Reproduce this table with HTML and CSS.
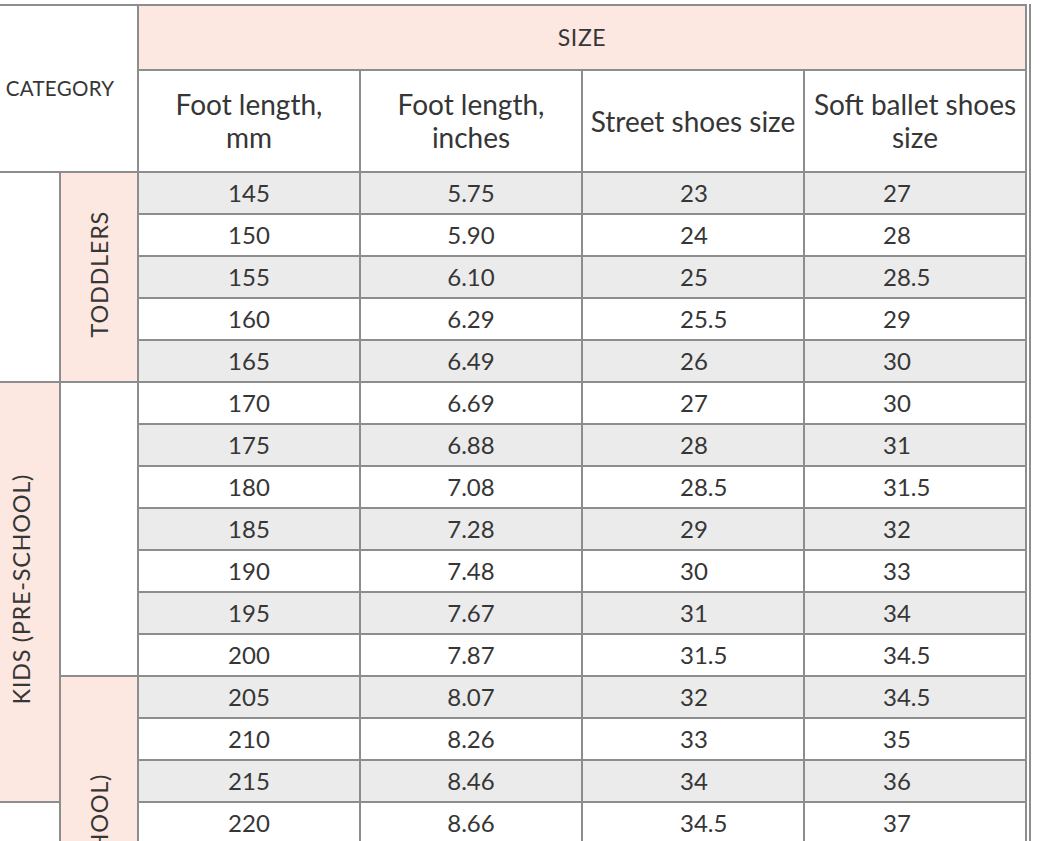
FILE: index.html
```html
<!DOCTYPE html>
<html lang="en">
<head>
<meta charset="utf-8">
<title>Size chart</title>
<link rel="stylesheet" href="styles.css">
</head>
<body>
<div class="frame">
<table class="chart">
  <colgroup>
    <col class="c-cat"><col class="c-cat"><col class="c-val"><col class="c-val"><col class="c-val"><col class="c-val">
  </colgroup>
  <thead>
    <tr class="h1">
      <th class="category" rowspan="2" colspan="2">CATEGORY</th>
      <th class="size" colspan="4">SIZE</th>
    </tr>
    <tr class="h2">
      <th>Foot length,<br>mm</th>
      <th>Foot length,<br>inches</th>
      <th>Street shoes size</th>
      <th>Soft ballet shoes<br>size</th>
    </tr>
  </thead>
  <tbody>
    <tr class="g"><td class="blank" rowspan="5"></td><td class="cat" rowspan="5"><span>TODDLERS</span></td><td>145</td><td>5.75</td><td class="street">23</td><td class="ballet">27</td></tr>
    <tr><td>150</td><td>5.90</td><td class="street">24</td><td class="ballet">28</td></tr>
    <tr class="g"><td>155</td><td>6.10</td><td class="street">25</td><td class="ballet">28.5</td></tr>
    <tr><td>160</td><td>6.29</td><td class="street">25.5</td><td class="ballet">29</td></tr>
    <tr class="g"><td>165</td><td>6.49</td><td class="street">26</td><td class="ballet">30</td></tr>
    <tr><td class="cat" rowspan="10"><span>KIDS (PRE-SCHOOL)</span></td><td class="blank" rowspan="7"></td><td>170</td><td>6.69</td><td class="street">27</td><td class="ballet">30</td></tr>
    <tr class="g"><td>175</td><td>6.88</td><td class="street">28</td><td class="ballet">31</td></tr>
    <tr><td>180</td><td>7.08</td><td class="street">28.5</td><td class="ballet">31.5</td></tr>
    <tr class="g"><td>185</td><td>7.28</td><td class="street">29</td><td class="ballet">32</td></tr>
    <tr><td>190</td><td>7.48</td><td class="street">30</td><td class="ballet">33</td></tr>
    <tr class="g"><td>195</td><td>7.67</td><td class="street">31</td><td class="ballet">34</td></tr>
    <tr><td>200</td><td>7.87</td><td class="street">31.5</td><td class="ballet">34.5</td></tr>
    <tr class="g"><td class="cat" rowspan="9"><span>KIDS (SCHOOL)</span></td><td>205</td><td>8.07</td><td class="street">32</td><td class="ballet">34.5</td></tr>
    <tr><td>210</td><td>8.26</td><td class="street">33</td><td class="ballet">35</td></tr>
    <tr class="g"><td>215</td><td>8.46</td><td class="street">34</td><td class="ballet">36</td></tr>
    <tr><td class="blank" rowspan="6"></td><td>220</td><td>8.66</td><td class="street">34.5</td><td class="ballet">37</td></tr>
    <tr class="g"><td>225</td><td>8.86</td><td class="street">35</td><td class="ballet">38</td></tr>
    <tr><td>230</td><td>9.06</td><td class="street">36</td><td class="ballet">38.5</td></tr>
    <tr class="g"><td>235</td><td>9.25</td><td class="street">36.5</td><td class="ballet">39</td></tr>
    <tr><td>240</td><td>9.45</td><td class="street">37</td><td class="ballet">40</td></tr>
    <tr class="g"><td>245</td><td>9.65</td><td class="street">38</td><td class="ballet">40.5</td></tr>
  </tbody>
</table>
</div>
</body>
</html>
```
FILE: styles.css
```css
html, body {
  margin: 0;
  padding: 0;
  background: #ffffff;
}

body {
  font-family: Lato, "Open Sans", "Liberation Sans", sans-serif;
  color: #363636;
  overflow: hidden;
}

.frame {
  display: inline-block;
  margin: 4px 0 0 -19px;
  padding-right: 2px;
  border-right: 2px solid #8d8d8d;
}

.chart {
  border-collapse: collapse;
  table-layout: fixed;
  width: 1046px;
  border: 2px solid #8d8d8d;
}

.c-cat { width: 78px; }
.c-val { width: 222px; }

.chart th,
.chart td {
  border: 2px solid #8d8d8d;
  padding: 0;
  text-align: center;
  vertical-align: middle;
  font-weight: 400;
}

.chart th {
  font-size: 28px;
  line-height: 33px;
  background: #ffffff;
}

.h1 th { height: 63px; }
.h2 th { height: 100px; }

.chart th.category {
  font-size: 20.5px;
  letter-spacing: 0.3px;
}

.chart th.size {
  font-size: 23px;
  letter-spacing: 0.6px;
  background: #fde8e1;
}

.chart td {
  height: 40px;
  font-size: 24px;
  line-height: 28px;
  background: #ffffff;
}

.chart td.street {
  text-align: left;
  padding-left: 97px;
}

.chart td.ballet {
  text-align: left;
  padding-left: 78px;
}

.chart tr.g td {
  background: #ebebeb;
}

.chart td.blank,
.chart tr.g td.blank {
  background: #ffffff;
}

.chart td.cat,
.chart tr.g td.cat {
  background: #fde8e1;
  font-size: 23.5px;
}

.cat span {
  display: inline-block;
  writing-mode: vertical-rl;
  transform: rotate(180deg);
  white-space: nowrap;
  letter-spacing: 0.7px;
}
```
